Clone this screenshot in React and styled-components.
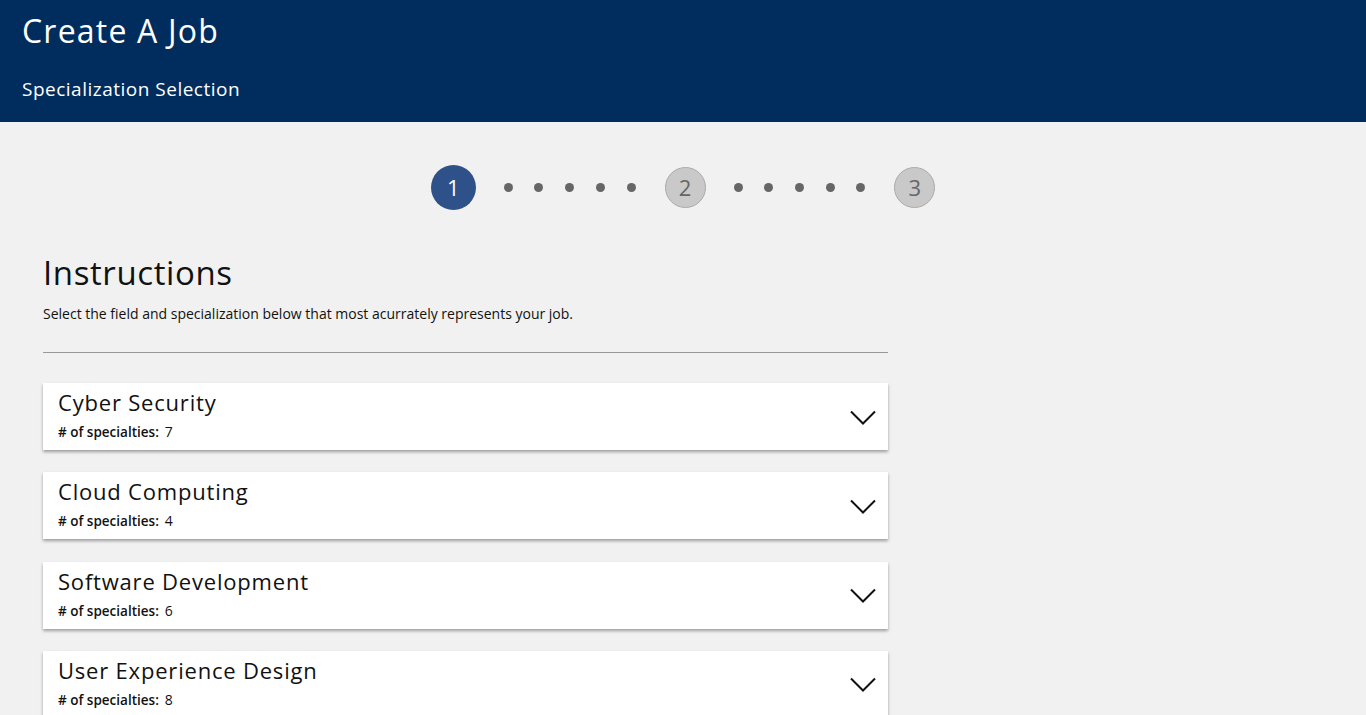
import React from "react";
import styled, { createGlobalStyle } from "styled-components";

const Global = createGlobalStyle`
  html, body { margin: 0; padding: 0; }
  body {
    background: #f0f1f0;
    font-family: "Open Sans", "Noto Sans", sans-serif;
    color: #111;
    overflow: hidden;
  }
`;

const Page = styled.div`
  min-height: 715px;
  background: #f0f1f0;
`;

const Header = styled.header`
  background: #012d5e;
  height: 122px;
  box-sizing: border-box;
  padding: 11px 22px 0;
  color: #fff;
`;

const Title = styled.h1`
  margin: 0;
  font-weight: 400;
  font-size: 32px;
  line-height: 40px;
  letter-spacing: 1.2px;
`;

const Subtitle = styled.h2`
  margin: 26px 0 0;
  font-weight: 400;
  font-size: 19px;
  line-height: 24px;
  letter-spacing: 0.5px;
`;

const Stepper = styled.div`
  display: flex;
  align-items: center;
  justify-content: center;
  padding-top: 42px;
  height: 46px;
`;

const Step = styled.div`
  box-sizing: border-box;
  width: ${(p) => (p.$active ? 45 : 41)}px;
  height: ${(p) => (p.$active ? 45 : 41)}px;
  border-radius: 50%;
  display: flex;
  align-items: center;
  justify-content: center;
  font-size: 22px;
  background: ${(p) => (p.$active ? "#2f518a" : "#c9c9c9")};
  color: ${(p) => (p.$active ? "#fff" : "#666")};
  border: ${(p) => (p.$active ? "none" : "1px solid #aaa")};
`;

const Dots = styled.div`
  display: flex;
  gap: 21.7px;
  margin: 0 29px 0 28px;
`;

const Dot = styled.span`
  width: 9px;
  height: 9px;
  border-radius: 50%;
  background: #666;
`;

const Content = styled.main`
  width: 845px;
  margin-left: 43px;
  padding-top: 42px;
`;

const Heading = styled.h3`
  margin: 0;
  font-weight: 400;
  font-size: 33px;
  line-height: 42px;
  letter-spacing: 0.6px;
`;

const Intro = styled.p`
  margin: 10px 0 0;
  font-size: 14px;
  line-height: 20px;
  color: #111;
`;

const Divider = styled.hr`
  margin: 28px 0 30px;
  border: none;
  border-top: 1px solid #999;
`;

const List = styled.div`
  display: flex;
  flex-direction: column;
  gap: 22.3px;
`;

const Card = styled.div`
  background: #fff;
  height: 67px;
  box-sizing: border-box;
  padding: 5px 12px 0 15px;
  display: flex;
  align-items: center;
  justify-content: space-between;
  box-shadow: 0 2px 3px rgba(0, 0, 0, 0.35);
`;

const CardText = styled.div`
  display: flex;
  flex-direction: column;
  align-self: flex-start;
`;

const CardTitle = styled.div`
  font-size: 22px;
  line-height: 29px;
  letter-spacing: 0.8px;
`;

const Count = styled.div`
  margin-top: 6px;
  font-size: 13.5px;
  line-height: 18px;
  display: flex;
  align-items: baseline;
  gap: 6px;
`;

const CountLabel = styled.span`
  font-weight: 600;
`;

const CountValue = styled.span`
  font-size: 14px;
`;

const ChevronBox = styled.div`
  display: flex;
  padding-bottom: 4px;
`;

const Chevron = () => (
  <svg width="26" height="15" viewBox="0 0 26 15" fill="none">
    <path d="M1 1.5 L13 13.5 L25 1.5" stroke="#111" strokeWidth="2" />
  </svg>
);

const fields = [
  { name: "Cyber Security", count: 7 },
  { name: "Cloud Computing", count: 4 },
  { name: "Software Development", count: 6 },
  { name: "User Experience Design", count: 8 },
];

export default function App() {
  return (
    <Page>
      <Global />
      <Header>
        <Title>Create A Job</Title>
        <Subtitle>Specialization Selection</Subtitle>
      </Header>
      <Stepper>
        <Step $active>1</Step>
        <Dots>{[0, 1, 2, 3, 4].map((i) => <Dot key={i} />)}</Dots>
        <Step>2</Step>
        <Dots>{[0, 1, 2, 3, 4].map((i) => <Dot key={i} />)}</Dots>
        <Step>3</Step>
      </Stepper>
      <Content>
        <Heading>Instructions</Heading>
        <Intro>Select the field and specialization below that most acurrately represents your job.</Intro>
        <Divider />
        <List>
          {fields.map((f) => (
            <Card key={f.name}>
              <CardText>
                <CardTitle>{f.name}</CardTitle>
                <Count>
                  <CountLabel># of specialties:</CountLabel>
                  <CountValue>{f.count}</CountValue>
                </Count>
              </CardText>
              <ChevronBox>
                <Chevron />
              </ChevronBox>
            </Card>
          ))}
        </List>
      </Content>
    </Page>
  );
}
